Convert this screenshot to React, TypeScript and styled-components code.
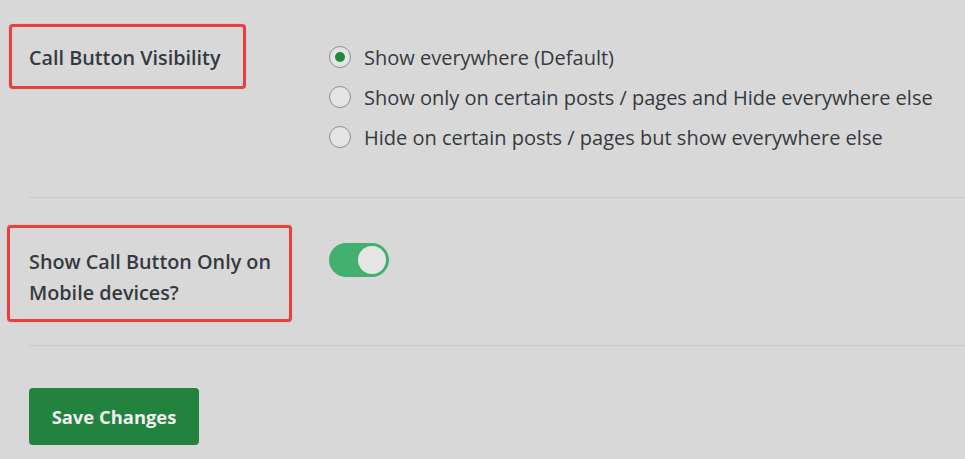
import React, { useState } from "react";
import styled, { createGlobalStyle } from "styled-components";

const GlobalStyle = createGlobalStyle`
  html, body {
    margin: 0;
    padding: 0;
    background: #d8d8d8;
  }
  body {
    font-family: "Open Sans", "Noto Sans", sans-serif;
    color: #353a40;
  }
`;

const Page = styled.div`
  width: 965px;
  height: 459px;
  overflow: hidden;
  padding-left: 29px;
  box-sizing: border-box;
`;

const Row = styled.div<{ $top: number; $bottom: number }>`
  display: grid;
  grid-template-columns: 300px 1fr;
  padding-top: ${(p) => p.$top}px;
  padding-bottom: ${(p) => p.$bottom}px;
  border-bottom: 1px solid #cbcbcb;
`;

const LabelCell = styled.div<{ $pad: number }>`
  position: relative;
  padding-top: ${(p) => p.$pad}px;
`;

const LabelText = styled.div`
  font-size: 19.8px;
  font-weight: 600;
  line-height: 31px;
  position: relative;
  z-index: 1;
`;

/* red annotation frame drawn over the label */
const Highlight = styled.div<{ $l: number; $t: number; $w: number; $h: number }>`
  position: absolute;
  left: ${(p) => p.$l}px;
  top: ${(p) => p.$t}px;
  width: ${(p) => p.$w}px;
  height: ${(p) => p.$h}px;
  box-sizing: border-box;
  border: 3px solid #e8403f;
  border-radius: 4px;
  box-shadow: 0 0 1px rgba(0, 0, 0, 0.35);
`;

const RadioList = styled.div`
  display: flex;
  flex-direction: column;
`;

const RadioRow = styled.label`
  display: flex;
  align-items: center;
  height: 40px;
  font-size: 20px;
  cursor: pointer;
`;

const RadioCircle = styled.span<{ $checked: boolean }>`
  width: 22px;
  height: 22px;
  flex: none;
  border-radius: 50%;
  box-sizing: border-box;
  border: 1px solid #8c8f94;
  background: #e4e4e4;
  margin-right: 13px;
  display: flex;
  align-items: center;
  justify-content: center;
  &::after {
    content: "";
    width: 10px;
    height: 10px;
    border-radius: 50%;
    background: #1f8a3d;
    display: ${(p) => (p.$checked ? "block" : "none")};
  }
`;

const Toggle = styled.button<{ $on: boolean }>`
  width: 60px;
  height: 34px;
  border: none;
  border-radius: 17px;
  padding: 3px;
  background: ${(p) => (p.$on ? "#44b070" : "#b5b5b5")};
  display: flex;
  justify-content: ${(p) => (p.$on ? "flex-end" : "flex-start")};
  cursor: pointer;
  &::after {
    content: "";
    width: 28px;
    height: 28px;
    border-radius: 50%;
    background: #e6e6e6;
  }
`;

const SaveButton = styled.button`
  margin-top: 42px;
  width: 170px;
  height: 57px;
  border: none;
  border-radius: 4px;
  background: #23823d;
  color: #f0f0f0;
  font-family: "Open Sans", "Noto Sans", sans-serif;
  font-size: 18.4px;
  font-weight: 700;
  cursor: pointer;
`;

const options = [
  "Show everywhere (Default)",
  "Show only on certain posts / pages and Hide everywhere else",
  "Hide on certain posts / pages but show everywhere else",
];

export default function App() {
  const [choice, setChoice] = useState(0);
  const [mobileOnly, setMobileOnly] = useState(true);

  return (
    <Page>
      <GlobalStyle />
      <Row $top={37} $bottom={40}>
        <LabelCell $pad={5}>
          <Highlight $l={-20} $t={-13} $w={237} $h={65} />
          <LabelText>Call Button Visibility</LabelText>
        </LabelCell>
        <RadioList>
          {options.map((o, i) => (
            <RadioRow key={o} onClick={() => setChoice(i)}>
              <RadioCircle $checked={choice === i} />
              {o}
            </RadioRow>
          ))}
        </RadioList>
      </Row>
      <Row $top={45} $bottom={37}>
        <LabelCell $pad={3}>
          <Highlight $l={-22} $t={-18} $w={285} $h={97} />
          <LabelText>
            Show Call Button Only on
            <br />
            Mobile devices?
          </LabelText>
        </LabelCell>
        <div>
          <Toggle $on={mobileOnly} onClick={() => setMobileOnly(!mobileOnly)} />
        </div>
      </Row>
      <SaveButton>Save Changes</SaveButton>
    </Page>
  );
}
